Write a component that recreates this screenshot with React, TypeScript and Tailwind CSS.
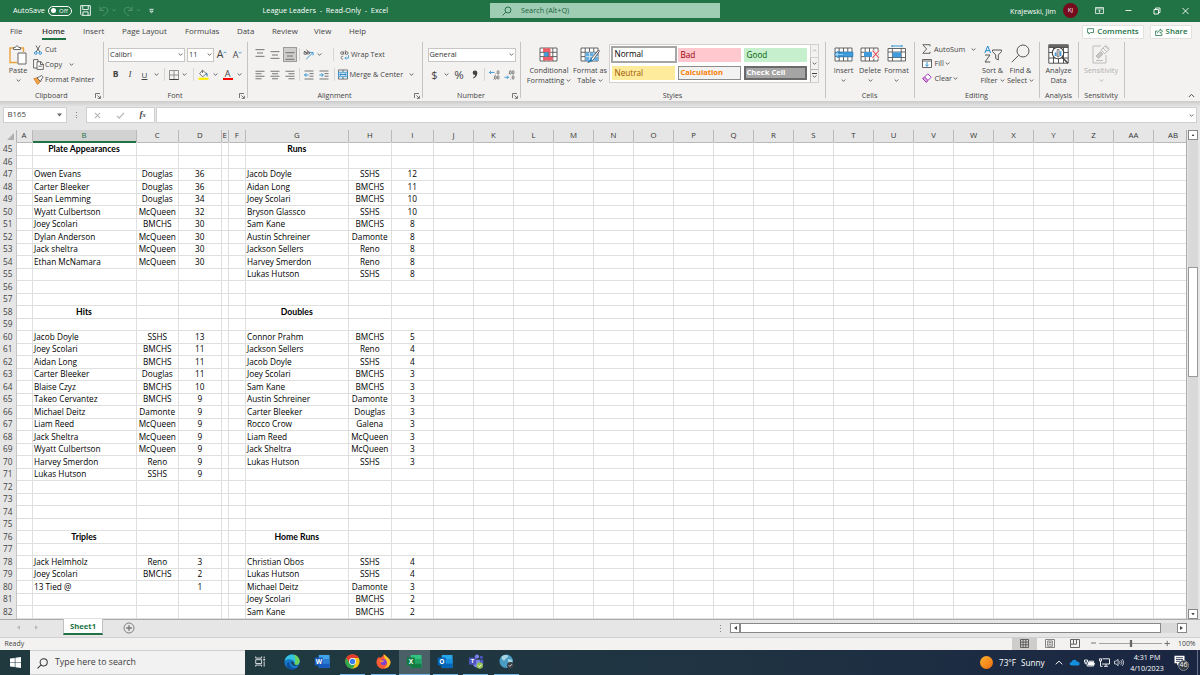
import type { ReactNode } from "react"
import clsx from "clsx"

const COLS = ["A", "B", "C", "D", "E", "F", "G", "H", "I", "J", "K", "L", "M", "N", "O", "P", "Q", "R", "S", "T", "U", "V", "W", "X", "Y", "Z", "AA", "AB"]

const GRID = "grid grid-cols-[16.5px_16px_104px_42.5px_42.5px_7.5px_16.5px_103.5px_42.5px_42.5px_repeat(18,40px)_33px]"

type Entry = [string, string, string]

// name, school, value keyed by row number
const LEFT: Record<number, Entry> = {
    47: ["Owen Evans", "Douglas", "36"],
    48: ["Carter Bleeker", "Douglas", "36"],
    49: ["Sean Lemming", "Douglas", "34"],
    50: ["Wyatt Culbertson", "McQueen", "32"],
    51: ["Joey Scolari", "BMCHS", "30"],
    52: ["Dylan Anderson", "McQueen", "30"],
    53: ["Jack sheltra", "McQueen", "30"],
    54: ["Ethan McNamara", "McQueen", "30"],
    60: ["Jacob Doyle", "SSHS", "13"],
    61: ["Joey Scolari", "BMCHS", "11"],
    62: ["Aidan Long", "BMCHS", "11"],
    63: ["Carter Bleeker", "Douglas", "11"],
    64: ["Blaise Czyz", "BMCHS", "10"],
    65: ["Takeo Cervantez", "BMCHS", "9"],
    66: ["Michael Deitz", "Damonte", "9"],
    67: ["Liam Reed", "McQueen", "9"],
    68: ["Jack Sheltra", "McQueen", "9"],
    69: ["Wyatt Culbertson", "McQueen", "9"],
    70: ["Harvey Smerdon", "Reno", "9"],
    71: ["Lukas Hutson", "SSHS", "9"],
    78: ["Jack Helmholz", "Reno", "3"],
    79: ["Joey Scolari", "BMCHS", "2"],
    80: ["13 Tied @", "", "1"],
}

const RIGHT: Record<number, Entry> = {
    47: ["Jacob Doyle", "SSHS", "12"],
    48: ["Aidan Long", "BMCHS", "11"],
    49: ["Joey Scolari", "BMCHS", "10"],
    50: ["Bryson Glassco", "SSHS", "10"],
    51: ["Sam Kane", "BMCHS", "8"],
    52: ["Austin Schreiner", "Damonte", "8"],
    53: ["Jackson Sellers", "Reno", "8"],
    54: ["Harvey Smerdon", "Reno", "8"],
    55: ["Lukas Hutson", "SSHS", "8"],
    60: ["Connor Prahm", "BMCHS", "5"],
    61: ["Jackson Sellers", "Reno", "4"],
    62: ["Jacob Doyle", "SSHS", "4"],
    63: ["Joey Scolari", "BMCHS", "3"],
    64: ["Sam Kane", "BMCHS", "3"],
    65: ["Austin Schreiner", "Damonte", "3"],
    66: ["Carter Bleeker", "Douglas", "3"],
    67: ["Rocco Crow", "Galena", "3"],
    68: ["Liam Reed", "McQueen", "3"],
    69: ["Jack Sheltra", "McQueen", "3"],
    70: ["Lukas Hutson", "SSHS", "3"],
    78: ["Christian Obos", "SSHS", "4"],
    79: ["Lukas Hutson", "SSHS", "4"],
    80: ["Michael Deitz", "Damonte", "3"],
    81: ["Joey Scolari", "BMCHS", "2"],
    82: ["Sam Kane", "BMCHS", "2"],
}

const TITLES: Record<number, [string, string]> = {
    45: ["Plate Appearances", "Runs"],
    58: ["Hits", "Doubles"],
    76: ["Triples", "Home Runs"],
}

const ROWS = Array.from({ length: 38 }, (_, i) => 45 + i)

function Chevron({ className = "" }: { className?: string }) {
    return (
        <svg viewBox="0 0 5 5" className={clsx("h-[5px] w-[5px] shrink-0", className)} fill="none" stroke="#555" strokeWidth="0.9">
            <path d="M0.7 1.5 2.5 3.3 4.3 1.5" />
        </svg>
    )
}

function Slot({ w, children }: { w: string; children?: ReactNode }) {
    return <div className={clsx("flex shrink-0 items-center justify-center", w)}>{children}</div>
}

function Sep() {
    return <div className="h-[13px] w-px shrink-0 bg-[#d8d6d4]" />
}

function Launcher() {
    return (
        <svg viewBox="0 0 6 6" className="absolute right-[2px] bottom-[-0.5px] h-[6px] w-[6px]" fill="none" stroke="#555" strokeWidth="0.8">
            <path d="M0.5 5V0.5H5M2.4 2.4 5.2 5.2M5.4 2.8V5.4H2.8" />
        </svg>
    )
}

function Group({ w, label, launcher, children }: { w: string; label: string; launcher?: boolean; children: ReactNode }) {
    return (
        <div className={clsx("relative flex h-[56px] shrink-0 flex-col border-r border-[#c6c4c2]", w)}>
            <div className="flex h-[48px] shrink-0">{children}</div>
            <div className="h-[10px] shrink-0 text-center text-[7.2px] leading-[11px] text-[#444]">{label}</div>
            {launcher && <Launcher />}
        </div>
    )
}

function BigButton({ w, icon, lines, arrow, inline, dim }: { w: string; icon: ReactNode; lines: string[]; arrow?: boolean; inline?: boolean; dim?: boolean }) {
    return (
        <div className={clsx("flex shrink-0 flex-col items-center whitespace-nowrap leading-[10px]", dim ? "text-[#b1afad]" : "text-[#444]", w)}>
            <div className="flex h-[23px] items-center">{icon}</div>
            <div className="h-[10px]">{lines[0]}</div>
            <div className="flex h-[10px] items-center gap-[2px]">
                {lines[1] && <span>{lines[1]}</span>}
                {(arrow || inline) && <Chevron className={dim ? "opacity-40" : ""} />}
            </div>
        </div>
    )
}

function Lines({ rows, className = "" }: { rows: [number, number][]; className?: string }) {
    return (
        <svg viewBox="0 0 10 10" className={clsx("h-[10px] w-[10px]", className)} stroke="#666" strokeWidth="0.9">
            {rows.map(([a, b], i) => (
                <path key={i} d={`M${a} ${(10 / rows.length) * (i + 0.5)}H${b}`} />
            ))}
        </svg>
    )
}

function Indent({ flip }: { flip?: boolean }) {
    return (
        <svg viewBox="0 0 10 10" className="h-[10px] w-[10px]" fill="none" stroke="#666" strokeWidth="0.9">
            <path d="M0.5 1H9.5M5.5 3.6H9.5M5.5 6.2H9.5M0.5 9H9.5" />
            <path stroke="#1e8bcd" d={flip ? "M0.3 5H4.2M2.6 3.3 4.3 5 2.6 6.7" : "M4.6 5H0.6M2.2 3.3 0.5 5 2.2 6.7"} />
        </svg>
    )
}

function Decimals({ right }: { right?: boolean }) {
    return (
        <svg viewBox="0 0 12 12" className="h-[12px] w-[11px]" fill="none" stroke="#1e8bcd" strokeWidth="0.9">
            <path d={right ? "M0.5 8.5H5M3.3 6.8 5 8.5 3.3 10.2" : "M6 3.2H0.5M2.2 1.5 0.5 3.2 2.2 4.9"} />
            <g stroke="#555" strokeWidth="0.8">
                <rect x="9" y="1.3" width="1.8" height="3.8" rx="0.9" />
                <rect x="9" y="6.8" width="1.8" height="3.8" rx="0.9" />
                <rect x="6" y={right ? 1.3 : 6.8} width="1.8" height="3.8" rx="0.9" />
                <path d={right ? "M4.4 5H5M7 10.6H7.6" : "M7 5H7.6M4.4 10.6H5"} />
            </g>
        </svg>
    )
}

function TitleBar() {
    return (
        <header className="flex h-[21.5px] shrink-0 items-center bg-[#217346] text-[7.3px] whitespace-nowrap text-white">
            <div className="w-[48px] pl-[13px]">AutoSave</div>
            <div className="flex h-[9.5px] w-[24px] items-center gap-[3.5px] rounded-full border border-white pl-[1.5px] text-[6px] leading-none">
                <span className="h-[5px] w-[5px] rounded-full bg-white" />
                Off
            </div>
            <svg viewBox="0 0 12 12" className="ml-[8px] h-[11px] w-[11px]" fill="none" stroke="white" strokeWidth="1">
                <path d="M0.7 0.7H11.3V11.3H2L0.7 10ZM3 0.7V5H9V0.7M3.2 11V7.5H8.8V11" />
            </svg>
            <svg viewBox="0 0 46 12" className="ml-[8px] h-[12px] w-[46px]" fill="none" stroke="#4f936c" strokeWidth="1">
                <path d="M1 1.5V5.5H5M1.2 5.2C3 1.5 8 1.5 8.8 5 9.2 7.5 6.5 9 4 11M13.5 4.5 15 6 16.5 4.5M33 1.5V5.5H29M32.8 5.2C31 1.5 26 1.5 25.2 5 24.8 7.5 27.5 9 30 11M38 4.5 39.5 6 41 4.5" />
            </svg>
            <svg viewBox="0 0 6 6" className="ml-[4px] h-[6px] w-[5px]" stroke="white" fill="none">
                <path d="M0.5 1H5.5M1 3.2H5L3 5Z" />
            </svg>
            <div className="ml-[108.5px] w-[227.5px] text-[7.3px]">
                League Leaders&nbsp; -&nbsp; Read-Only&nbsp; -&nbsp; Excel
            </div>
            <div className="flex h-[15px] w-[230px] items-center bg-[#9fcdb3] text-[#1d6340]">
                <svg viewBox="0 0 10 10" className="mr-[9px] ml-[12px] h-[10px] w-[10px]" fill="none" stroke="#1d6340" strokeWidth="0.9">
                    <circle cx="6" cy="4" r="3" />
                    <path d="M3.8 6.2 0.6 9.4" />
                </svg>
                Search (Alt+Q)
            </div>
            <div className="ml-[290px] w-[53px] pt-[2px] text-[7.2px]">Krajewski, Jim</div>
            <div className="flex h-[15px] w-[15px] items-center justify-center rounded-full bg-[#750b1c] text-[6px]">KJ</div>
            <svg viewBox="0 0 10 8" className="ml-[17px] h-[7px] w-[9px]" fill="none" stroke="white" strokeWidth="0.9">
                <path d="M0.5 0.5H9.5V7.5H0.5ZM0.5 2.2H9.5M5 6.5V3.8M3.6 5 5 3.6 6.4 5" />
            </svg>
            <svg viewBox="0 0 66 8" className="ml-[21px] h-[8px] w-[66px]" fill="none" stroke="white" strokeWidth="0.9">
                <path d="M0.5 3.5H6.5M29 2.5H33.5V7H29ZM30.5 2.5V1H35V5.5H33.5M57.5 1 63.5 7M63.5 1 57.5 7" />
            </svg>
        </header>
    )
}

function TabBar() {
    return (
        <nav className="flex h-[20.5px] shrink-0 items-center bg-[#f3f2f1] text-[7.9px] whitespace-nowrap text-[#444]">
            <span className="w-[42px] pl-[10px]">File</span>
            <span className="relative w-[41px] font-semibold text-[#333]">
                Home
                <span className="absolute bottom-[-2.5px] left-0 h-[2px] w-[24px] bg-[#217346]" />
            </span>
            <span className="w-[39px]">Insert</span>
            <span className="w-[63px]">Page Layout</span>
            <span className="w-[52px]">Formulas</span>
            <span className="w-[35px]">Data</span>
            <span className="w-[42px]">Review</span>
            <span className="w-[35px]">View</span>
            <span>Help</span>
            <div className="mr-[8px] ml-auto flex gap-[6px] text-[7.9px] font-semibold text-[#217346]">
                <div className="flex h-[14px] w-[62px] items-center justify-center gap-[3px] rounded-[1px] border border-[#e3e1df] bg-white">
                    <svg viewBox="0 0 8 8" className="h-[7px] w-[7px]" fill="none" stroke="#217346" strokeWidth="0.9">
                        <path d="M0.5 0.8H7.5V5.2H4L2.2 7V5.2H0.5Z" />
                    </svg>
                    Comments
                </div>
                <div className="flex h-[14px] w-[42px] items-center justify-center gap-[3px] rounded-[1px] border border-[#e3e1df] bg-white">
                    <svg viewBox="0 0 8 8" className="h-[8px] w-[8px]" fill="none" stroke="#217346" strokeWidth="0.8">
                        <path d="M2.5 3H0.6V7.5H6.8V5.2M2.4 5.2C2.6 3.4 4 2.7 5.2 2.7V1L7.6 3.2 5.2 5.2V3.9" />
                    </svg>
                    Share
                </div>
            </div>
        </nav>
    )
}

function Combo({ w, children }: { w: string; children: ReactNode }) {
    return (
        <div className={clsx("flex h-[14px] shrink-0 items-center justify-between border border-[#c8c6c4] bg-white pr-[1px] pl-[1px] text-[7.4px] text-[#333]", w)}>
            {children}
            <Chevron />
        </div>
    )
}

function StyleCell({ className, children }: { className: string; children: ReactNode }) {
    return <div className={clsx("flex h-[14px] w-[63px] items-center pl-[3px] text-[8.2px] leading-none", className)}>{children}</div>
}

function TableIcon({ kind }: { kind: "cond" | "table" | "insert" | "delete" | "format" }) {
    return (
        <svg viewBox="0 0 20 18" className="h-[18px] w-[20px]" fill="none" strokeWidth="0.9">
            {kind !== "format" && <path fill="#fff" stroke="#555" d="M1 3H18V16H1ZM1 7.3H18M1 11.6H18M5.2 3V16M9.5 3V16M13.8 3V16" />}
            {kind === "cond" && (
                <g stroke="none">
                    <path fill="#ef6068" d="M4 3.3H11.5V7H4ZM4 12H13.8V15.6H4ZM9.7 7.3H11.5V11.4H9.7Z" />
                    <path fill="#3f9bdc" d="M5.2 7.6H9.4V11.4H5.2Z" />
                </g>
            )}
            {kind === "table" && (
                <g>
                    <path fill="#68b0e4" stroke="none" d="M5.5 7.5H18V16H5.5Z" />
                    <path stroke="#fff" strokeWidth="0.6" d="M5.5 11.6H18M9.5 7V16M13.8 7V16" />
                    <path stroke="#555" fill="#fff" d="M18.5 5 11 14 8 17.5 13 15.3 19.5 6Z" />
                    <path fill="#1e8bcd" stroke="none" d="M11 13.5 7.5 17.6 13 15.6Z" />
                </g>
            )}
            {kind === "insert" && (
                <g>
                    <path fill="#3f9bdc" stroke="#1e6fae" strokeWidth="0.5" d="M5 7H19V11.8H5Z" />
                    <path fill="#a9d4f2" stroke="#1e8bcd" d="M9 8.4H4.2V6L0.7 9.4 4.2 12.8V10.4H9" />
                </g>
            )}
            {kind === "delete" && (
                <g>
                    <path fill="#3f9bdc" d="M4 7H12V11.8H4Z" />
                    <path stroke="#f3f2f1" strokeWidth="3" d="M12.5 6 19 13M19 6 12.5 13" />
                    <path stroke="#e8454e" strokeWidth="1.1" d="M12.5 5.5 19 13M19 5.5 12.5 13" />
                </g>
            )}
            {kind === "format" && (
                <g>
                    <path stroke="#1e8bcd" d="M5 1H15M5 0V2.2M15 0V2.2" />
                    <path fill="#fff" stroke="#555" d="M1 3.5H18.5V16H1ZM1 7H18.5M1 12.5H18.5M5.4 3.5V16M14.2 3.5V16" />
                    <path fill="#3f9bdc" d="M5.6 7.3H14V12.3H5.6Z" />
                </g>
            )}
        </svg>
    )
}

function Ribbon() {
    return (
        <section className="flex h-[58.5px] shrink-0 bg-[#f3f2f1] text-[7.3px] whitespace-nowrap text-[#444]">
            <Group w="w-[103.5px]" label="Clipboard" launcher>
                <BigButton
                    w="w-[33px] pl-[3px]"
                    lines={["Paste"]}
                    arrow
                    icon={
                        <svg viewBox="0 0 18 20" className="mt-[2px] h-[20px] w-[18px]" fill="none" strokeWidth="1">
                            <path stroke="#e8a33d" strokeWidth="1.4" d="M8 17.5H1V3H4.5M11.5 3H14.5V7" />
                            <path stroke="#666" fill="#fff" d="M4.5 4.5V2.5H6.3C6.5 0.5 9.5 0.5 9.7 2.5H11.5V4.5ZM9 8H17V19H9Z" />
                        </svg>
                    }
                />
                <div className="flex flex-col">
                    <div className="flex h-[15px] items-center">
                        <Slot w="w-[12px] pr-[2px]">
                            <svg viewBox="0 0 8 10" className="h-[10px] w-[8px]" fill="none" stroke="#555" strokeWidth="0.9">
                                <path d="M2 0.5 5.8 7M6 0.5 2.2 7" />
                                <circle cx="1.8" cy="8" r="1.3" stroke="#1e8bcd" />
                                <circle cx="6.2" cy="8" r="1.3" stroke="#1e8bcd" />
                            </svg>
                        </Slot>
                        Cut
                    </div>
                    <div className="flex h-[15px] items-center">
                        <Slot w="w-[12px] pr-[2px]">
                            <svg viewBox="0 0 11 11" className="h-[11px] w-[11px] shrink-0" fill="#fff" stroke="#555" strokeWidth="0.9">
                                <path d="M4 9H0.6V0.6H5V3M4 2.8H8L10.3 5V10.4H4ZM7.5 2.8V5.5H10.3M5.5 7.2H8.8" />
                            </svg>
                        </Slot>
                        <span className="w-[23.5px]">Copy</span>
                        <Chevron />
                    </div>
                    <div className="flex h-[15px] items-center">
                        <Slot w="w-[12px] pr-[2px]">
                            <svg viewBox="0 0 11 10" className="h-[10px] w-[11px] shrink-0" fill="none" strokeWidth="0.9">
                                <path fill="#f0a64a" stroke="#dd7b1d" d="M0.8 3.5 4.5 3 7.5 6.5 4.5 9.3Z" />
                                <path fill="#fff" stroke="#555" d="M4 2.8 6.5 1.8 8.8 0.5 10.2 2 8.6 4 7.6 6.6Z" />
                            </svg>
                        </Slot>
                        <span className="text-[7.1px]">Format Painter</span>
                    </div>
                </div>
            </Group>

            <Group w="w-[144px]" label="Font" launcher>
                <div className="flex w-full flex-col pl-[4.5px]">
                    <div className="flex h-[25px] items-center">
                        <Combo w="w-[77px]">Calibri</Combo>
                        <div className="w-[2px]" />
                        <Combo w="w-[27px]">11</Combo>
                        <Slot w="w-[16px]">
                            <span className="text-[10.5px] leading-none">A</span>
                            <svg viewBox="0 0 4 8" className="h-[10px] w-[4px]" fill="none" stroke="#1e8bcd" strokeWidth="0.8"><path d="M0.5 2.3 2 0.8 3.5 2.3" /></svg>
                        </Slot>
                        <Slot w="w-[15px]">
                            <span className="text-[9px] leading-none">A</span>
                            <svg viewBox="0 0 4 8" className="h-[10px] w-[4px]" fill="none" stroke="#1e8bcd" strokeWidth="0.8"><path d="M0.5 0.8 2 2.3 3.5 0.8" /></svg>
                        </Slot>
                    </div>
                    <div className="flex h-[15px] items-center">
                        <Slot w="w-[15px]"><b className="text-[8.5px]">B</b></Slot>
                        <Slot w="w-[14px]"><i className="font-['Liberation_Serif'] text-[9px]">I</i></Slot>
                        <Slot w="w-[15px]"><span className="text-[8px] underline">U</span></Slot>
                        <Slot w="w-[8px]"><Chevron /></Slot>
                        <Slot w="w-[8px]"><Sep /></Slot>
                        <Slot w="w-[11px]">
                            <svg viewBox="0 0 10 10" className="h-[10px] w-[10px]" fill="none" stroke="#888" strokeWidth="0.9"><path d="M0.5 0.5H9.5V9.5H0.5ZM0.5 5H9.5M5 0.5V9.5" /><path stroke="#333" d="M0.5 9.5H9.5" /></svg>
                        </Slot>
                        <Slot w="w-[11px]"><Chevron /></Slot>
                        <Slot w="w-[6px]"><Sep /></Slot>
                        <Slot w="w-[14px]">
                            <svg viewBox="0 0 11 11" className="h-[11px] w-[11px]" fill="none" stroke="#555" strokeWidth="0.8">
                                <path d="M0.5 9.8H10.5" stroke="#ffee00" strokeWidth="2.2" />
                                <path fill="#fff" d="M4.5 1.2 8.2 4.6 4.8 7.8 1.6 4.8ZM4.5 1.2V4" />
                                <path fill="#1e6fae" stroke="none" d="M8 3.5C10 4.5 10 6.5 9 7.8 8.3 6.5 8.8 5.5 8 4.5Z" />
                            </svg>
                        </Slot>
                        <Slot w="w-[10px]"><Chevron /></Slot>
                        <Slot w="w-[15px]">
                            <span className="flex h-[11px] w-[10px] justify-center border-b-2 border-[#f00] text-[9px] leading-[9px]">A</span>
                        </Slot>
                        <Slot w="w-[8px]"><Chevron /></Slot>
                    </div>
                </div>
            </Group>

            <Group w="w-[175px]" label="Alignment" launcher>
                <div className="flex w-full flex-col pl-[5px]">
                    <div className="flex h-[25px] items-center">
                        <Slot w="w-[15px]"><Lines className="mb-[4px]" rows={[[0.5, 9.5], [2, 8], [0.5, 9.5]]} /></Slot>
                        <Slot w="w-[15px]"><Lines rows={[[0.5, 9.5], [2, 8], [0.5, 9.5]]} /></Slot>
                        <Slot w="w-[15px]">
                            <div className="flex h-[15px] w-[14px] items-end justify-center border border-[#9a9a9a] bg-[#cfcdcb]"><Lines rows={[[0.5, 9.5], [2, 8], [0.5, 9.5]]} /></div>
                        </Slot>
                        <Slot w="w-[3px]"><Sep /></Slot>
                        <Slot w="w-[16px]">
                            <svg viewBox="0 0 12 12" className="h-[11px] w-[11px]" fill="none" strokeWidth="0.9">
                                <path stroke="#1e8bcd" d="M3.5 11 10.8 4M7.8 3.8H11V7" />
                                <g stroke="#555"><circle cx="2.5" cy="4.5" r="1.5" /><circle cx="6" cy="4.2" r="1.3" /><path d="M1 2 4.5 6M4 0.8 7 4.8" /></g>
                            </svg>
                        </Slot>
                        <Slot w="w-[6px]"><Chevron /></Slot>
                        <Slot w="w-[22px]"><Sep /></Slot>
                        <svg viewBox="0 0 10 12" className="-ml-[4.5px] h-[12px] w-[9px]" fill="none" stroke="#555" strokeWidth="0.8">
                            <circle cx="2.2" cy="3.8" r="1.5" /><path d="M4 2V5.5M6 0.8V5.5" /><circle cx="7.5" cy="3.8" r="1.5" />
                            <path d="M3.5 7.5C0.5 6.5 0.5 11.5 3.5 10.6" /><path stroke="#1e8bcd" d="M9.4 6V9.5H5.5M7 8 5.5 9.5 7 11" />
                        </svg>
                        <span className="pl-[2px] text-[7.1px]">Wrap Text</span>
                    </div>
                    <div className="flex h-[15px] items-center">
                        <Slot w="w-[15px]"><Lines rows={[[0.5, 9.5], [0.5, 6.5], [0.5, 9.5], [0.5, 6.5]]} /></Slot>
                        <Slot w="w-[15px]"><Lines rows={[[0.5, 9.5], [2, 8], [0.5, 9.5], [2, 8]]} /></Slot>
                        <Slot w="w-[15px]"><Lines rows={[[0.5, 9.5], [3.5, 9.5], [0.5, 9.5], [3.5, 9.5]]} /></Slot>
                        <Slot w="w-[3px]"><Sep /></Slot>
                        <Slot w="w-[16px]"><Indent /></Slot>
                        <Slot w="w-[14px]"><Indent flip /></Slot>
                        <Slot w="w-[7px]"><Sep /></Slot>
                        <svg viewBox="0 0 11 11" className="h-[11px] w-[10px]" fill="none" stroke="#555" strokeWidth="0.9">
                            <path fill="#fff" d="M0.5 0.5H10.5V10.5H0.5ZM5.5 0.5V10.5" /><path fill="#cfe6f7" stroke="#1e8bcd" d="M0.5 3H10.5V8H0.5Z" /><path stroke="#1e6fae" d="M2 5.5H9M3.2 4.3 2 5.5 3.2 6.7M7.8 4.3 9 5.5 7.8 6.7" />
                        </svg>
                        <span className="w-[61.5px] pl-[2px]">Merge &amp; Center</span>
                        <Chevron />
                    </div>
                </div>
            </Group>

            <Group w="w-[98px]" label="Number" launcher>
                <div className="flex w-full flex-col pl-[5px]">
                    <div className="flex h-[25px] items-center"><Combo w="w-[88px]">General</Combo></div>
                    <div className="flex h-[15px] items-center">
                        <Slot w="w-[14px]"><span className="text-[11px] leading-none">$</span></Slot>
                        <Slot w="w-[9px]"><Chevron /></Slot>
                        <Slot w="w-[17px]"><span className="text-[11.5px] leading-none">%</span></Slot>
                        <Slot w="w-[14px]">
                            <svg viewBox="0 0 6 9" className="h-[9px] w-[6px]" fill="#444"><circle cx="3" cy="2.7" r="2.3" /><path d="M5.3 2.7C5.3 5.5 4 7.5 1.2 8.5L0.9 7.7C2.6 6.8 3.2 5.8 3.2 4Z" /></svg>
                        </Slot>
                        <Slot w="w-[5px]"><Sep /></Slot>
                        <Slot w="w-[15px]"><Decimals /></Slot>
                        <Slot w="w-[15px]"><Decimals right /></Slot>
                    </div>
                </div>
            </Group>

            <Group w="w-[305px]" label="Styles">
                <BigButton w="ml-[6px] w-[45px]" icon={<TableIcon kind="cond" />} lines={["Conditional", "Formatting"]} inline />
                <BigButton w="w-[37px]" icon={<TableIcon kind="table" />} lines={["Format as", "Table"]} inline />
                <div className="mt-[2px] flex h-[39px] w-[210px] border border-[#d2d0ce] bg-white">
                    <div className="grid w-[200px] grid-cols-[65.5px_65.5px_65.5px] content-between gap-x-[0.5px] p-[2px]">
                        <StyleCell className="h-[17px]! w-[66px]! -translate-x-px -translate-y-px border-2 border-[#a5a5a5] bg-white pl-[2px]! text-black">Normal</StyleCell>
                        <StyleCell className="mt-[1px] bg-[#ffc7ce] text-[#9c0006]">Bad</StyleCell>
                        <StyleCell className="mt-[1px] bg-[#c6efce] text-[#006100]">Good</StyleCell>
                        <StyleCell className="bg-[#ffeb9c] text-[#9c5700]">Neutral</StyleCell>
                        <StyleCell className="border border-[#8d8d8d] bg-[#f2f2f2] pl-[2px]! text-[7.5px]! font-bold text-[#fa7d00]">Calculation</StyleCell>
                        <StyleCell className="border-2 border-[#6a6a6a] bg-[#a5a5a5] pl-[1px]! text-[7.6px]! font-bold text-white">Check Cell</StyleCell>
                    </div>
                    <div className="flex flex-1 flex-col bg-[#f3f2f1]">
                        <div className="flex flex-1 items-center justify-center border-b border-l border-[#d2d0ce]"><Chevron className="rotate-180 opacity-40" /></div>
                        <div className="flex flex-1 items-center justify-center border-b border-l border-[#b5b3b1]"><Chevron /></div>
                        <div className="flex flex-1 flex-col items-center justify-center border-l border-[#b5b3b1]">
                            <div className="h-px w-[5px] bg-[#444]" />
                            <Chevron />
                        </div>
                    </div>
                </div>
            </Group>

            <Group w="w-[89px]" label="Cells">
                <BigButton w="ml-[5px] w-[26px]" icon={<TableIcon kind="insert" />} lines={["Insert"]} arrow />
                <BigButton w="w-[27px]" icon={<TableIcon kind="delete" />} lines={["Delete"]} arrow />
                <BigButton w="w-[26px]" icon={<TableIcon kind="format" />} lines={["Format"]} arrow />
            </Group>

            <Group w="w-[125px]" label="Editing">
                <div className="flex w-[64px] flex-col pl-[7px]">
                    <div className="flex h-[14px] items-center">
                        <svg viewBox="0 0 9 10" className="mr-[3.5px] h-[10px] w-[9px]" fill="none" stroke="#555" strokeWidth="0.9"><path d="M8 2.3V0.7H0.8L4.6 5 0.8 9.3H8V7.7" /></svg>
                        <span className="w-[36.5px]">AutoSum</span><Chevron />
                    </div>
                    <div className="flex h-[15px] items-center">
                        <svg viewBox="0 0 10 9" className="mr-[3px] h-[9px] w-[10px]" fill="#fff" stroke="#555" strokeWidth="0.9"><path d="M0.5 0.5H9.5V8.5H0.5ZM0.5 2H9.5" /><path fill="none" stroke="#1e8bcd" d="M5 3V7.3M3.3 5.6 5 7.3 6.7 5.6" /></svg>
                        <span className="w-[10.5px]">Fill</span><Chevron />
                    </div>
                    <div className="flex h-[14px] items-center">
                        <svg viewBox="0 0 10 10" className="mr-[3px] h-[10px] w-[10px]" fill="#fff" stroke="#a33ab5" strokeWidth="1"><path d="M5.8 0.8 9.2 4.2 4.2 9.2 0.8 5.8Z" /><path fill="#d9a5e2" d="M2.6 4 6 7.4 4.2 9.2 0.8 5.8Z" /></svg>
                        <span className="w-[18.5px]">Clear</span><Chevron />
                    </div>
                </div>
                <BigButton
                    w="w-[28px]"
                    lines={["Sort &", "Filter"]}
                    inline
                    icon={
                        <svg viewBox="0 0 18 18" className="h-[18px] w-[18px]" fill="none" strokeWidth="1">
                            <path stroke="#1e8bcd" d="M0.8 8 3.7 1 6.6 8M1.8 5.7H5.6" />
                            <path stroke="#555" d="M1 10H6L1 17H6.3M8.5 5H17.5V6.5L14.3 10V15L11.7 13.5V10L8.5 6.5Z" />
                        </svg>
                    }
                />
                <BigButton
                    w="w-[28px]"
                    lines={["Find &", "Select"]}
                    inline
                    icon={
                        <svg viewBox="0 0 19 19" className="h-[19px] w-[19px]" fill="none" stroke="#555" strokeWidth="1">
                            <circle cx="12" cy="7" r="6" />
                            <path d="M7.7 11.3 0.8 18.2" />
                        </svg>
                    }
                />
            </Group>

            <Group w="w-[39px]" label="Analysis">
                <BigButton
                    w="w-[38px]"
                    lines={["Analyze", "Data"]}
                    icon={
                        <svg viewBox="0 0 21 20" className="mt-[1px] h-[20px] w-[21px]" fill="#fff" stroke="#444" strokeWidth="0.9">
                            <path d="M0.8 0.8H20.2V19.2H0.8ZM0.8 3.5H20.2M0.8 8.5H20.2M0.8 14H20.2M5.5 3.5V19.2M15.5 3.5V19.2M10.5 14V19.2" />
                            <path fill="#666" stroke="none" d="M0.8 0.8H20.2V3H0.8Z" />
                            <circle cx="10" cy="9" r="5.7" strokeWidth="1.1" />
                            <path strokeWidth="1.5" d="M14 13.2 19.8 19" />
                            <path fill="#3f9bdc" stroke="none" d="M6.7 8.5H8.5V12H6.7ZM11.7 7.3H13.4V12H11.7Z" />
                            <path fill="#fff" strokeWidth="0.7" d="M9.2 5.5H11V12.8H9.2Z" />
                        </svg>
                    }
                />
            </Group>

            <Group w="w-[46px]" label="Sensitivity">
                <BigButton
                    w="w-[45px]"
                    lines={["Sensitivity"]}
                    arrow
                    dim
                    icon={
                        <svg viewBox="0 0 18 20" className="mt-[1px] h-[20px] w-[18px]" fill="none" stroke="#b8b6b4" strokeWidth="0.9">
                            <path d="M9 2H1V19H14V11" />
                            <path fill="#c9c7c5" d="M4 12 8.5 7.5 11 10 6.5 14.5Z" />
                            <path d="M9 6 13 2 16.8 5.8 12.8 9.8ZM11 4 14.8 7.8M13.2 0.8 17.5 5M4 16.5H11" />
                        </svg>
                    }
                />
            </Group>
            <div className="flex flex-1 items-end justify-end pr-[5px] pb-[2.5px]">
                <svg viewBox="0 0 8 5" className="h-[5px] w-[7px]" fill="none" stroke="#444" strokeWidth="1.1"><path d="M1 4.2 4 1.2 7 4.2" /></svg>
            </div>
        </section>
    )
}

function FormulaBar() {
    return (
        <div className="flex h-[29px] shrink-0 bg-gradient-to-b from-[#cbcbcb] to-[#e6e6e6] to-20% pt-[6.5px] pl-[3px] text-[#444]">
            <div className="flex h-[16px] w-[64px] items-center justify-between border border-[#d0d0d0] bg-white pr-[4px] pl-[3.5px] text-[7.9px]">
                B165
                <svg viewBox="0 0 5 4" className="h-[4px] w-[5px]" fill="#666"><path d="M0 0.5H5L2.5 3.5Z" /></svg>
            </div>
            <div className="flex h-[16px] w-[18.5px] flex-col items-center justify-center gap-[1.5px]">
                <span className="h-px w-px bg-[#888]" /><span className="h-px w-px bg-[#888]" /><span className="h-px w-px bg-[#888]" />
            </div>
            <div className="flex h-[16px] w-[69px] items-center border border-[#d0d0d0] bg-white">
                <svg viewBox="0 0 8 8" className="ml-[7.5px] h-[7px] w-[7px]" stroke="#b5b5b5" strokeWidth="1.2"><path d="M1 1 7 7M7 1 1 7" /></svg>
                <svg viewBox="0 0 10 8" className="ml-[15px] h-[7px] w-[9px]" fill="none" stroke="#b5b5b5" strokeWidth="1.4"><path d="M1 4.5 3.5 7 9 1" /></svg>
                <i className="ml-[14.5px] font-['Liberation_Serif'] text-[9px] font-bold">f<span className="text-[6.5px]">x</span></i>
            </div>
            <div className="ml-[1.5px] flex h-[16px] w-[1041px] items-center justify-end border border-[#d0d0d0] bg-white pr-[2px]"><Chevron /></div>
        </div>
    )
}

function Cell({ children, bold, left }: { children?: ReactNode; bold?: boolean; left?: boolean }) {
    return (
        <div className={clsx("border-r border-b border-[#dfdfdf]", left ? "pl-[1.5px]" : "text-center", bold && "font-['Lato','Open_Sans',sans-serif] text-[8.7px] font-bold")}>
            {children}
        </div>
    )
}

function Sheet() {
    return (
        <div className="flex h-[489.5px] shrink-0 bg-[#e6e6e6]">
            <div className="h-[489.5px] w-[1187px] overflow-hidden border-r border-[#ababab] bg-white">
                <div className={clsx(GRID, "h-[12.5px] bg-[#e6e6e6] text-[7.8px] leading-[11px] text-[#333]")}>
                    <div className="flex items-end justify-end border-r border-b border-[#b4b4b4] pr-[2px] pb-[2px]">
                        <svg viewBox="0 0 8 8" className="h-[7px] w-[7px]" fill="#b0b0b0"><path d="M8 0V8H0Z" /></svg>
                    </div>
                    {COLS.map((c) => (
                        <div
                            key={c}
                            className={clsx(
                                "border-r border-r-[#b9b9b9] text-center",
                                c === "B" ? "border-b-2 border-b-[#217346] bg-[#d2d2d2] text-[#217346]" : "border-b border-b-[#b9b9b9]",
                                c === "AB" && "pl-[6px]",
                            )}
                        >
                            {c}
                        </div>
                    ))}
                </div>
                {ROWS.map((r) => {
                    const title = TITLES[r]
                    const l = LEFT[r]
                    const g = RIGHT[r]
                    return (
                        <div key={r} className={clsx(GRID, "h-[12.5px] text-[8.25px] leading-[13px] whitespace-nowrap text-black")}>
                            <div className="border-r border-b border-[#c4c4c4] bg-[#e6e6e6] text-center text-[#444]">{r}</div>
                            <Cell />
                            <Cell bold={!!title} left={!title}>{title ? title[0] : l?.[0]}</Cell>
                            <Cell>{l?.[1]}</Cell>
                            <Cell>{l?.[2]}</Cell>
                            <Cell />
                            <Cell />
                            <Cell bold={!!title} left={!title}>{title ? title[1] : g?.[0]}</Cell>
                            <Cell>{g?.[1]}</Cell>
                            <Cell>{g?.[2]}</Cell>
                            {COLS.slice(9).map((c) => <Cell key={c} />)}
                        </div>
                    )
                })}
                <div className={clsx(GRID, "h-[3px]")}>
                    <div className="border-r border-[#c4c4c4] bg-[#e6e6e6]" />
                    {COLS.map((c) => <div key={c} className="border-r border-[#dfdfdf]" />)}
                </div>
            </div>
            <div className="ml-[1px] flex w-[10px] flex-col bg-[#d9d9d9]">
                <div className="flex h-[10.5px] items-center justify-center border border-[#888] bg-white">
                    <svg viewBox="0 0 4 3" className="h-[2.5px] w-[4px]" fill="#444"><path d="M0 3 2 0 4 3Z" /></svg>
                </div>
                <div className="mt-[127px] h-[110px] border border-[#999] bg-white" />
                <div className="mt-auto flex h-[10.5px] items-center justify-center border border-[#888] bg-white">
                    <svg viewBox="0 0 4 3" className="h-[2.5px] w-[4px]" fill="#444"><path d="M0 0H4L2 3Z" /></svg>
                </div>
            </div>
        </div>
    )
}

function SheetTabs() {
    return (
        <div className="flex h-[17.5px] shrink-0 border-t border-[#ababab] bg-[#e6e6e6]">
            <svg viewBox="0 0 63 16" className="h-[16px] w-[63px]" fill="#b8b8b8"><path d="M20 5.2V9.8L17 7.5ZM35 5.2V9.8L38 7.5Z" /></svg>
            <div className="-mt-px flex h-[16px] w-[40px] items-center justify-center border-x border-b-2 border-x-[#c0c0c0] border-b-[#217346] bg-white pt-[1px] text-[7.7px] font-bold text-[#217346]">Sheet1</div>
            <svg viewBox="0 0 12 12" className="mt-[2px] ml-[20px] h-[12px] w-[12px]" fill="none" stroke="#777" strokeWidth="0.9"><circle cx="6" cy="6" r="5" /><path d="M6 3.2V8.8M3.2 6H8.8" strokeWidth="1.3" /></svg>
            <div className="ml-[585px] flex w-[1px] flex-col justify-center gap-[2px]">
                <span className="h-px w-px bg-[#888]" /><span className="h-px w-px bg-[#888]" /><span className="h-px w-px bg-[#888]" />
            </div>
            <div className="mt-[3px] ml-[9px] flex h-[10px] w-[456.5px] bg-[#d9d9d9]">
                <div className="flex w-[10px] items-center justify-center border border-[#888] bg-white"><svg viewBox="0 0 3 4" className="h-[4px] w-[3px]" fill="#444"><path d="M3 0V4L0 2Z" /></svg></div>
                <div className="w-[421px] border border-[#888] bg-white" />
                <div className="ml-auto flex w-[10px] items-center justify-center border border-[#888] bg-white"><svg viewBox="0 0 3 4" className="h-[4px] w-[3px]" fill="#444"><path d="M0 0V4L3 2Z" /></svg></div>
            </div>
        </div>
    )
}

function StatusBar() {
    return (
        <div className="flex h-[13.5px] shrink-0 items-center border-t border-[#d0d0d0] bg-[#f3f2f1] text-[6.9px] text-[#444]">
            <span className="w-[1012px] pl-[4.5px]">Ready</span>
            <div className="flex h-full w-[25px] items-center justify-center bg-[#cfcdcb]">
                <svg viewBox="0 0 9 9" className="h-[9px] w-[9px]" fill="none" stroke="#555" strokeWidth="0.9"><path d="M0.5 0.5H8.5V8.5H0.5ZM0.5 3.1H8.5M0.5 5.8H8.5M3.1 0.5V8.5M5.8 0.5V8.5" /></svg>
            </div>
            <Slot w="w-[25px]"><svg viewBox="0 0 10 9" className="h-[9px] w-[10px]" fill="none" stroke="#666" strokeWidth="0.8"><path d="M0.5 0.5H9.5V8.5H0.5ZM2.7 2H7.3V7.2H2.7ZM3.7 3.6H6.3M3.7 5.3H6.3" /></svg></Slot>
            <Slot w="w-[25px]"><svg viewBox="0 0 10 9" className="h-[9px] w-[10px]" fill="none" stroke="#555" strokeWidth="0.9"><path d="M0.5 0.5H9.5V8.5H0.5ZM3.5 0.5V5.2H0.5M6.5 0.5V5.2H3.5" /></svg></Slot>
            <svg viewBox="0 0 82 9" className="ml-[3px] h-[9px] w-[82px]" fill="none" stroke="#666" strokeWidth="0.9"><path d="M1 4H6M74.5 4.5H80M77.2 1.8V7.2" /><path stroke="#999" d="M9 4.5H72" /><path strokeWidth="2.3" d="M41 1V8" /></svg>
            <span className="ml-[6px]">100%</span>
        </div>
    )
}

function AppSlot({ running, active, children }: { running?: boolean; active?: boolean; children: ReactNode }) {
    return (
        <div className={clsx("flex h-[25px] w-[30.8px] shrink-0 flex-col items-center", active && "bg-[#4b5f66]")}>
            <div className="flex h-[23.5px] items-center">{children}</div>
            {(running || active) && <div className={clsx("h-[1.5px] bg-[#76b9ed]", active ? "w-full" : "w-[25px]")} />}
        </div>
    )
}

function OfficeIcon({ letter, body, dark, mid }: { letter: string; body: string; dark: string; mid: string }) {
    return (
        <svg viewBox="0 0 16 16" className="h-[15px] w-[16px]">
            <path fill={body} d="M4.5 1H16V15H4.5Z" />
            <path fill={mid} d="M4.5 5.3H16V10H4.5Z" />
            <path fill={dark} d="M4.5 10H16V15H4.5ZM0.3 3.8H8.8V12.2H0.3Z" />
            <text x="4.6" y="10.5" textAnchor="middle" fontSize="7" fontWeight="700" fill="#fff" fontFamily="Open Sans, sans-serif">{letter}</text>
        </svg>
    )
}

function Taskbar() {
    return (
        <footer className="flex h-[25px] shrink-0 items-center bg-gradient-to-r from-[#20393f] from-20% via-[#1f3342] via-60% to-[#1a2542] text-white">
            <Slot w="w-[30px]">
                <svg viewBox="0 0 11 11" className="h-[11px] w-[11px]" fill="#fff"><path d="M0 1.6 4.8 0.9V5.2H0ZM5.4 0.8 11 0V5.2H5.4ZM0 5.8H4.8V10.1L0 9.4ZM5.4 5.8H11V11L5.4 10.2Z" /></svg>
            </Slot>
            <div className="flex h-[25px] w-[215px] items-center border-y border-[#cfcfcf] bg-[#f2f2f2] pt-[1px] text-[8.8px] text-[#3c3c3c]">
                <svg viewBox="0 0 12 12" className="mr-[7px] ml-[7px] h-[11px] w-[11px]" fill="none" stroke="#333" strokeWidth="1.1"><circle cx="7.3" cy="4.7" r="3.9" /><path d="M4.5 7.5 0.6 11.4" /></svg>
                Type here to search
            </div>
            <AppSlot>
                <svg viewBox="0 0 12 12" className="h-[11px] w-[11px]" fill="none" stroke="#e5e9ea" strokeWidth="1"><path d="M0.8 0.5V2.3H7.2V0.5M0.8 4H7.2V8.2H0.8ZM0.8 11.5V9.9H7.2V11.5M10 0.5V2.4M10 6V11.5" /><path d="M9 4H11" strokeWidth="1.8" /></svg>
            </AppSlot>
            <AppSlot>
                <svg viewBox="0 0 16 16" className="ml-[1px] h-[16px] w-[16px]">
                    <circle cx="8" cy="8" r="7.6" fill="#1578c8" />
                    <path fill="#35c1e0" d="M0.5 7C1.5 2.5 5 0.4 8 0.4 12.5 0.4 15.6 4 15.6 7.2 15.6 10 13 11.4 10.5 10.6 11.5 8.5 10 6 7 5.5 4 5 1.8 5.8 0.5 7Z" />
                    <path fill="#6ad25a" d="M9.5 0.6C13.5 1.5 15.6 4.5 15.6 7.2 15.6 10 13 11.4 10.5 10.6 11.5 8.5 12 4 9.5 0.6Z" />
                    <path fill="#0c4f9e" d="M5.5 8C4.5 12 8.5 15.5 12.8 13.8 11 16 7 16 4.5 14.2 1.5 12 2.5 8.5 5.5 8Z" />
                    <path fill="#20393f" d="M7.3 8.2C7.2 10 9 11.5 11.5 11.8 13 11.8 14.2 11.5 15 11 13 11.4 10.2 11 9.7 9.8 10 9 9.3 7.8 8.3 7.4Z" />
                </svg>
            </AppSlot>
            <AppSlot><OfficeIcon letter="W" body="#41a5ee" mid="#2b7cd3" dark="#185abd" /></AppSlot>
            <AppSlot running>
                <svg viewBox="0 0 16 16" className="h-[15px] w-[15px]">
                    <circle cx="8" cy="8" r="7.6" fill="#fbc116" />
                    <path fill="#e33b2e" d="M1.4 4.2A7.6 7.6 0 0 1 14.6 4.2H8L4.7 9.9Z" />
                    <path fill="#2da94f" d="M1.4 4.2A7.6 7.6 0 0 0 8 15.6L11.3 9.9H4.7Z" />
                    <circle cx="8" cy="8" r="3.7" fill="#fff" />
                    <circle cx="8" cy="8" r="2.9" fill="#3a7df0" />
                </svg>
            </AppSlot>
            <AppSlot running>
                <svg viewBox="0 0 16 16" className="h-[15px] w-[15px]">
                    <path fill="#ff5a36" d="M2.5 3.5C3 4 4 3.8 4.8 4 6 2.5 7.5 3 8.3 0.3 10 1.5 10.8 2.4 11.5 3.8 13 4 14.8 5.5 15.4 8 15.5 13 12 15.8 8 15.8 3.5 15.8 0.4 12.5 0.5 8.5 0.6 6 1.6 4.8 2.5 3.5Z" />
                    <path fill="#ffc52e" d="M8.3 0.3C12 3 15.6 6 15.4 9 15 13 12 15.2 8.5 15 12 14 12.5 10 11.3 7.5 10.5 5.8 8.3 4.5 8.3 0.3Z" />
                    <circle cx="8.2" cy="8.8" r="3.1" fill="#7a45d8" />
                    <path fill="#ff9a2c" d="M3 7C5 5.8 7 7.5 9 7.3 8 8.5 7 8.5 6.3 9 5 8.5 4 8.5 3 7Z" />
                </svg>
            </AppSlot>
            <AppSlot active><OfficeIcon letter="X" body="#33c481" mid="#21a366" dark="#107c41" /></AppSlot>
            <AppSlot running><OfficeIcon letter="O" body="#28a8ea" mid="#1490df" dark="#0364b8" /></AppSlot>
            <AppSlot running>
                <svg viewBox="0 0 16 16" className="h-[15px] w-[16px]">
                    <circle cx="9" cy="2.7" r="2.3" fill="#7b83eb" /><circle cx="13.7" cy="3.5" r="1.6" fill="#5059c9" />
                    <path fill="#7b83eb" d="M5 6H12.5V11C12.5 15.5 5 15.5 5 11Z" /><path fill="#5059c9" d="M12.5 6H15.7V10C15.7 12.5 12.5 12.5 12.5 11Z" />
                    <path fill="#4b53bc" d="M0.5 3.8H8V11.3H0.5Z" />
                    <text x="4.2" y="9.9" textAnchor="middle" fontSize="6.4" fontWeight="700" fill="#fff" fontFamily="Open Sans, sans-serif">T</text>
                    <circle cx="12" cy="12.3" r="3.4" fill="#92c353" /><path d="M10.4 12.4 11.6 13.6 13.8 11.3" fill="none" stroke="#fff" />
                </svg>
            </AppSlot>
            <AppSlot running>
                <svg viewBox="0 0 16 16" className="h-[15px] w-[15px]">
                    <circle cx="7.7" cy="7.7" r="7.2" fill="#4a9cc4" />
                    <path fill="#a9d5e3" d="M3 2.5C6 0.5 9 0.8 10 2.5 9 5 6.5 4.5 6 7 4 7.5 2 5 3 2.5ZM9 6C12 5 14 6 14.5 8L10.5 9.5Z" />
                    <circle cx="12" cy="12" r="3.5" fill="#3b4146" /><path d="M10.4 12 11.6 13.2 13.7 10.9" fill="none" stroke="#ddd" />
                </svg>
            </AppSlot>

            <div className="ml-auto flex h-[25px] shrink-0 items-center text-[8.2px] whitespace-nowrap">
                <div className="mr-[6px] h-[13px] w-[13px] rounded-full bg-gradient-to-br from-[#fbb22c] to-[#ee6a12]" />
                <span className="w-[22px] pt-[1px]">73°F</span>
                <span className="w-[34px] pt-[1px]">Sunny</span>
                <svg viewBox="0 0 8 5" className="h-[5px] w-[8px]" fill="none" stroke="#fff"><path d="M0.8 4.3 4 1.1 7.2 4.3" /></svg>
                <svg viewBox="0 0 12 8" className="ml-[6px] h-[7px] w-[11px]" fill="#1490df"><path d="M3 7.5C-0.5 7.5 0 3.5 2.7 3.5 3.5 0 7.8 0 8.7 3 12.5 2.8 12.8 7.5 9.5 7.5Z" /></svg>
                <svg viewBox="0 0 11 8" className="ml-[4px] h-[8px] w-[11px]" fill="none" stroke="#fff" strokeWidth="0.9"><path fill="#fff" d="M4.5 3.2H9V6H4.5Z" /><path d="M10.4 4V5.7M0.5 1H3.5V3.2H0.5ZM1.2 3.5V4.7H3.2V7H9.6V2.2H4.5" /></svg>
                <svg viewBox="0 0 11 9" className="ml-[4px] h-[9px] w-[11px]" fill="none" stroke="#fff" strokeWidth="0.9"><path d="M3.5 0.8H10.5V6H3M5 8.3H9M7 6V8.3M0.5 0.8H2.5V3H0.5ZM1.5 3V8.3H3.5" /></svg>
                <svg viewBox="0 0 11 9" className="ml-[4px] h-[9px] w-[10px]" fill="none" stroke="#fff" strokeWidth="0.8"><path d="M0.5 3H2.2L4.5 1V8L2.2 6H0.5ZM6 3.2C6.8 4 6.8 5 6 5.8M7.5 2C9 3.5 9 5.5 7.5 7M9 0.8C11 3 11 6 9 8.2" /></svg>
                <div className="ml-[4px] w-[38px] text-center text-[7.1px] leading-[11px]">
                    <div>4:31 PM</div>
                    <div>4/10/2023</div>
                </div>
                <div className="relative ml-[8px] h-[15px] w-[23px]">
                    <svg viewBox="0 0 11 12" className="h-[12px] w-[11px]"><path fill="#fff" d="M0.5 0.8H10.5V8.3H5L3 10.6V8.3H0.5Z" /><path stroke="#1a2542" strokeWidth="0.8" d="M2 2.7H9M2 4.5H9M2 6.3H6" /></svg>
                    <span className="absolute top-[5px] left-[4px] flex h-[11px] w-[11px] items-center justify-center rounded-full border border-[#888] bg-[#333b44] text-[6.8px] leading-none">46</span>
                </div>
                <div className="mr-[2px] h-[25px] w-px bg-[#66708a]" />
            </div>
        </footer>
    )
}

export default function App() {
    return (
        <main className="flex h-[675px] w-[1200px] flex-col overflow-hidden bg-[#e6e6e6] font-['Open_Sans','Noto_Sans',sans-serif]">
            <TitleBar />
            <TabBar />
            <Ribbon />
            <FormulaBar />
            <Sheet />
            <SheetTabs />
            <StatusBar />
            <Taskbar />
        </main>
    )
}
